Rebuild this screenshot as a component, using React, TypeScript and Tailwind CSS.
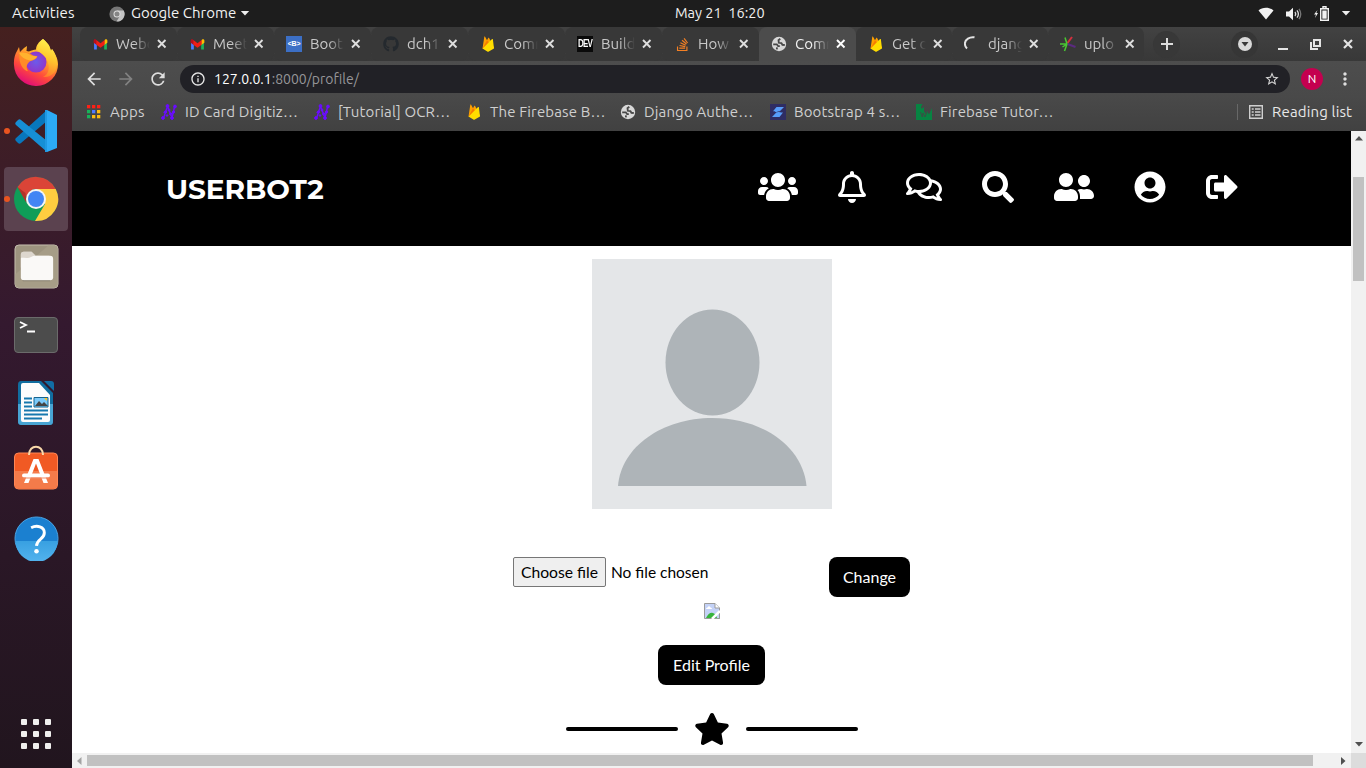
import type { ReactNode } from 'react';
import {
  FaUsers, FaRegBell, FaRegComments, FaSearch, FaUserFriends, FaUserCircle,
  FaSignOutAlt, FaStar, FaGithub, FaStackOverflow,
} from 'react-icons/fa';
import {
  MdArrowBack, MdArrowForward, MdRefresh, MdInfoOutline, MdStarBorder,
  MdMoreVert,
} from 'react-icons/md';

const Gmail = () => (
  <svg viewBox="0 0 16 12" className="h-[11px] w-[15px]">
    <path d="M1 2v9.500h3V5z" fill="#4a7cff" />
    <path d="M12 5v6.500h3V2z" fill="#1fb05a" />
    <path d="M12 2.200V6.500L15.500 4V2c0-1.600-1.800-2-2.700-1.200z" fill="#fbbc04" />
    <path d="M4 2v4.600L.5 4V2C.5.400 2.300 0 3.200.8z" fill="#b80e1c" />
    <path d="M3.500 1.100 8 4.600l4.500-3.500v5.200L8 9.500 3.500 6.300z" fill="#ef1d16" />
  </svg>
);

const Firebase = () => (
  <svg viewBox="0 0 16 16" className="size-4">
    <path d="M2.500 12.500 4.300.8c.1-.5.600-.5.800-.1L7 4.200 8.200 2c.2-.4.700-.4.900 0l5 10z" fill="#ffa000" />
    <path d="m2.500 12.500 7-7 2.600-2.400c.3-.3.700-.1.800.3L14 12.500l-5.200 3c-.5.300-1 .3-1.500 0z" fill="#ffdd00" />
    <path d="M2.500 12.500 8.700 6.300 7 4.200z" fill="#f57c00" />
  </svg>
);

const Bracket = () => (
  <span className="flex size-4 items-center justify-center bg-[#3c6fc5] font-['Liberation_Sans'] text-[7px] font-bold tracking-[-0.200px] text-white">&lt;B&gt;</span>
);

const Dev = () => (
  <span className="flex size-4 items-center justify-center bg-[#0a0a0a] font-['Liberation_Sans'] text-[8px] font-bold tracking-[-0.800px] text-white">
    <span className="scale-y-125">DEV</span>
  </span>
);

const Globe = () => (
  <svg viewBox="0 0 16 16" className="size-4">
    <circle cx="8" cy="8" r="7.200" fill="#d8d8d8" />
    <path d="M2.200 8.300h3.600l1.400 1.900h1.600M5.800 13.400l.2-2" fill="none" stroke="#484848" strokeWidth="1.800" />
    <path d="M9.300 2.800 7.500 4.200l.3 2.600 2.600.3 1 1.700 2.400.2" fill="none" stroke="#484848" strokeWidth="1.800" />
  </svg>
);

const Spinner = () => (
  <svg viewBox="0 0 16 16" className="size-4" fill="none" stroke="#e4e4e4" strokeWidth="2">
    <path d="M10.500 1.300C5.500.5 1.200 3.500.9 7.300c-.1 2.200.7 4 2.100 5.300" />
  </svg>
);

const Burst = () => (
  <svg viewBox="0 0 16 16" className="size-4" fill="none" strokeWidth="1.700">
    <path d="M7.500 7 12 1" stroke="#d2303f" strokeWidth="2" />
    <path d="M7.500 8 15.500 11" stroke="#5b2a80" strokeWidth="2" />
    <path d="M7 8 4.500 15M7 8H0M7 8 5 1.500M7 8 2.500 11" stroke="#49c832" strokeWidth="1.500" />
  </svg>
);

const Hacker = () => (
  <svg viewBox="0 0 16 16" className="size-4" fill="#6a0dff" stroke="#6a0dff">
    <path d="M3 13 6.500 2l4.500 12L13.500 3" fill="none" strokeWidth="1.400" />
    <path d="m2.500 8.500 3.500-1M10 9.500l3-1" fill="none" strokeWidth="1.300" />
    <circle cx="2" cy="14" r="1.400" /><circle cx="6.500" cy="2" r="1.400" />
    <circle cx="11" cy="14" r="1.400" /><circle cx="14" cy="2.500" r="1.400" />
    <circle cx="4.500" cy="8" r="1.200" /><circle cx="8" cy="6" r="1" />
    <circle cx="9.500" cy="10" r="1" /><circle cx="12.500" cy="8" r="1.200" /><circle cx="6" cy="11.500" r=".8" />
  </svg>
);

const Bolt = () => (
  <svg viewBox="0 0 16 16" className="size-4">
    <path d="M0 0h16v16H0z" fill="#2f2d63" />
    <path d="M6.500 3H14l-4.200 4.300H3zM6.300 8.500H13L9.500 13H2z" fill="#579dfa" />
    <path d="m5 7 6 2.500" stroke="#579dfa" strokeWidth="1.300" />
  </svg>
);

const Green = () => (
  <svg viewBox="0 0 16 16" className="size-4">
    <path d="M0 0h6.500C5 2 4.700 3.500 5.500 4.500 7 4.500 8 3.500 8 2v5l1.500 3L11 7l2 3.500L16 4v12H0z" fill="#078442" />
    <path d="m4.500 8 1.800 5 .7-4 2 4 2-5" stroke="#444" fill="none" strokeWidth=".8" />
  </svg>
);

const AppsGrid = () => (
  <svg viewBox="0 0 14 14" className="size-[14px]">
    {['#ff2015', '#ff2015', '#ff2015', '#18b35a', '#507bff', '#ffbd10', '#18b35a', '#ffbd10', '#ffbd10'].map((c, i) => (
      <rect key={i} x={(i % 3) * 5} y={Math.floor(i / 3) * 5} width="3.300" height="3.300" fill={c} />
    ))}
  </svg>
);

type Tab = { icon: ReactNode; label: string; active?: boolean; sep?: boolean; narrow?: boolean };
const tabs: Tab[] = [
  { icon: <Gmail />, label: 'Webc', sep: true },
  { icon: <Gmail />, label: 'Meet', sep: true },
  { icon: <Bracket />, label: 'Boot', sep: true },
  { icon: <FaGithub className="size-4 text-[#24292e]" />, label: 'dch1', sep: true },
  { icon: <Firebase />, label: 'Comr', sep: true },
  { icon: <Dev />, label: 'Build', sep: true },
  { icon: <FaStackOverflow className="size-[15px] text-[#f48024]" />, label: 'How' },
  { icon: <Globe />, label: 'Comr', active: true },
  { icon: <Firebase />, label: 'Get d', sep: true, narrow: true },
  { icon: <Spinner />, label: 'djang', sep: true, narrow: true },
  { icon: <Burst />, label: 'uplo', narrow: true },
];

function TabItem({ tab }: { tab: Tab }) {
  const width = tab.narrow ? 'w-24' : 'w-[97px]';
  const tone = tab.active ? 'bg-[#4c4c4c] text-[#f0f0f0] rounded-t-lg' : 'bg-[#383838] text-[#c8c8c8] rounded-lg';
  return (
    <div className={`${width} ${tone} flex h-[34px] shrink-0 items-center pl-3`}>
      <span className="flex size-4 shrink-0 items-center justify-center">{tab.icon}</span>
      <span className="ml-2 w-[34px] overflow-hidden text-[15px] whitespace-nowrap [mask-image:linear-gradient(to_right,black_55%,transparent_100%)]">{tab.label}</span>
      <svg viewBox="0 0 14 14" className={`ml-[5px] size-[14px] shrink-0 ${tab.active ? 'text-white' : 'text-[#dedede]'}`}>
        <path d="m3 3 7.500 7.500M10.500 3 3 10.500" stroke="currentColor" strokeWidth="1.900" />
      </svg>
      {tab.sep && <span className="-mr-px ml-auto h-5 w-px bg-[#747474]" />}
    </div>
  );
}

const bookmarks = [
  { icon: <Hacker />, label: 'ID Card Digitiz…', box: 'w-[153px]' },
  { icon: <Hacker />, label: '[Tutorial] OCR…', box: 'w-[152px]' },
  { icon: <Firebase />, label: 'The Firebase B…', box: 'w-[154px]' },
  { icon: <Globe />, label: 'Django Authe…', box: 'w-[150px]' },
  { icon: <Bolt />, label: 'Bootstrap 4 s…', box: 'w-[146px]' },
  { icon: <Green />, label: 'Firebase Tutor…', box: 'w-[150px]' },
];

function TopBar() {
  return (
    <header className="flex h-[27px] shrink-0 items-center bg-[#1d1d1d] text-[15px] text-[#f2f2f2]">
      <span className="w-[97px] pl-3 tracking-[0.100px]">Activities</span>
      <svg viewBox="0 0 16 16" className="ml-3 size-4">
        <circle cx="8" cy="8" r="7.600" fill="#777" />
        <path d="M8 4.500h6.700A7.600 7.600 0 0 1 7.500 15.600L11 9.800z" fill="#c4c4c4" />
        <circle cx="8" cy="8" r="3.500" fill="#ddd" /><circle cx="8" cy="8" r="2.500" fill="#858585" />
      </svg>
      <span className="ml-1.5 w-[109px] whitespace-nowrap">Google Chrome</span>
      <svg viewBox="0 0 10 6" className="h-[5px] w-[10px]"><path d="M0 0h10L5 5.500z" fill="#eee" /></svg>
      <span className="-mt-0.5 ml-[425px] w-[95px] text-[14.500px] whitespace-pre">May 21  16:20</span>
      <div className="ml-auto flex items-center pr-[15px]">
        <svg viewBox="0 0 16 13" className="h-[13px] w-4"><path d="M.5 3.500C4-.2 12-.2 15.500 3.500L8 12.500z" fill="#f2f2f2" /></svg>
        <svg viewBox="0 0 16 14" className="ml-3 h-[14px] w-4" fill="none" stroke="#ddd" strokeWidth="1.300">
          <path d="M0 4.500h3L7 .8v12.400L3 9.500H0z" fill="#f2f2f2" stroke="none" />
          <path d="M9 5q1.500 2 0 4M11 3.300q2.800 3.700 0 7.400" /><path d="M13 1.800q3.500 5.200 0 10.400" stroke="#777" />
        </svg>
        <svg viewBox="0 0 16 16" className="ml-3 size-4">
          <path d="M3.500 4 0 8.500h2L1 12l3-5H2.300z" fill="#f2f2f2" />
          <path d="M6.700 2.700h7.600v11.600H6.700zM9 2V.8h3V2" fill="none" stroke="#f2f2f2" strokeWidth="1.400" />
          <path d="M8.300 4.500h4.400v8.200H8.300z" fill="#f2f2f2" />
        </svg>
        <svg viewBox="0 0 10 6" className="ml-[11px] h-[5px] w-[10px]"><path d="M0 0h10L5 5.500z" fill="#eee" /></svg>
      </div>
    </header>
  );
}

const Firefox = () => (
  <svg viewBox="0 0 46 48" className="-mt-0.5 h-12 w-[46px]">
    <defs>
      <linearGradient id="ff" x1=".8" y1="0" x2=".3" y2="1"><stop stopColor="#fff14a" /><stop offset=".4" stopColor="#ffa52a" /><stop offset=".7" stopColor="#ff493c" /><stop offset="1" stopColor="#df087c" /></linearGradient>
      <linearGradient id="fy" x1=".6" y1="0" x2=".4" y2="1"><stop stopColor="#fff44f" /><stop offset=".5" stopColor="#ffc62e" /><stop offset="1" stopColor="#ff7a2c" /></linearGradient>
      <radialGradient id="fp"><stop stopColor="#6b5bea" /><stop offset="1" stopColor="#9136c9" /></radialGradient>
    </defs>
    <path d="M30 1c3 3 6 5 7 9l1 3 1-2c3 4 6 10 6 15a22 21.500 0 0 1-44 1C.500 21 2 16 4 13l2-4 1 5 4-4 3-2-.5 5 2.500.5c2-1 5-2 7-2 0-4 3-8 7-10.500z" fill="url(#ff)" />
    <circle cx="23" cy="24" r="10.500" fill="url(#fp)" />
    <path d="M30 1c3 3 6 5 7 9l1 3 1-2c3 4 5 9 5 14 0 9-6 15-14 14 5-2 7-8 5-14-1-6-5-8-11-13 0-4 2-8 6-11z" fill="url(#fy)" />
    <path d="M6 15c5-2 10-1 14 2.500l4.500.8c-1 3-4 4-7.500 5-4 3-4 7-2 10-5-1-9-7-9-18.300z" fill="#ff8b26" />
    <path d="M6 15c5-1 9 0 12 2.500l6 1c-1 2.500-4 3.500-7 4-5-1-9-3.500-11-7.500z" fill="#ffb22e" />
  </svg>
);

const Code = () => (
  <svg viewBox="0 0 44 44" className="ml-0.5 size-11">
    <path d="m32 1 10 5v33l-10 4z" fill="#2caaf5" />
    <path d="M32 1v11L6 34c-1 1-2 1-3 0l-2-2c-1-1-1-2 0-3z" fill="#0877bd" />
    <path d="M32 43V32L6 11c-1-1-2-1-3 0l-2 2c-1 1-1 2 0 3z" fill="#168fd5" />
    <path d="m30 1 2 0v42h-2z" fill="#2099e2" />
  </svg>
);

const Chrome = () => (
  <svg viewBox="0 0 46 46" className="size-[46px]">
    <circle cx="23" cy="23" r="22" fill="#0f9d58" />
    <path d="M23 13h19.700A22 22 0 0 1 22 45l10-17z" fill="#ffcd40" />
    <path d="M4.500 11A22 22 0 0 1 42.700 13H23c-4 0-8 3-9.500 8z" fill="#db4437" />
    <path d="m4.500 11 9 16-1-10z" fill="#b43328" />
    <circle cx="23" cy="23" r="10" fill="#f5f5f5" /><circle cx="23" cy="23" r="8" fill="#4285f4" />
  </svg>
);

const Files = () => (
  <svg viewBox="0 0 46 46" className="-mt-px size-[45px]">
    <rect x="1" y="1" width="44" height="44" rx="4" fill="#9d947f" stroke="#c7c1b0" />
    <path d="M1.500 31 35 1.500h6c2 0 3.500 1 3.500 3.500v36c0 2-1 3.500-3.500 3.500H5c-2 0-3.500-1-3.500-3.500z" fill="#a69d87" />
    <path d="M9 37.500h28" stroke="#777060" />
    <path d="M7 14V11c0-2 1-3 3-3h8l4 4h14v12H7z" fill="#ddd7ce" />
    <rect x="7" y="12" width="33" height="25" rx="3" fill="#faf9f7" />
    <path d="M7 14c4 0 8 1 11-1l4-2h-1l-3-3h-8c-2 0-3 1-3 3z" fill="#ddd7ce" />
  </svg>
);

const Terminal = () => (
  <svg viewBox="0 0 46 38" className="h-[38px] w-[46px]">
    <rect x="1.500" y="1.500" width="43" height="35" rx="3.500" fill="#4c4c4c" stroke="#6b6b6b" />
    <path d="m7 6 6 3-6 3M14 15.500h8" stroke="#fff" strokeWidth="1.800" fill="none" />
  </svg>
);

const Writer = () => (
  <svg viewBox="0 0 38 46" className="h-[46px] w-[38px]">
    <path d="M4 1h20l12 12v28c0 3-1 4-4 4H5c-3 0-4-1-4-4V5c0-3 1-4 3-4z" fill="#116d9f" />
    <path d="M1 24h35v17c0 3-1 4-4 4H5c-3 0-4-1-4-4z" fill="#48a4d3" />
    <path d="M6 3h16l11 12v25q0 2-2 2H6q-2 0-2-2V5q0-2 2-2z" fill="#fcfcfc" />
    <path d="M27 1h7q3 0 3 3v7z" fill="#116da4" />
    <path d="M7 18.500h8M7 22.500h8M7 26.500h8M7 30.500h24M7 34.500h24M7 38.500h18" stroke="#1678ae" strokeWidth="2" />
    <path d="M17 17.500h14v9.500H17z" fill="#7bcafa" stroke="#16648e" />
    <path d="m18 26 4-5 3 3 2-2 4 4z" fill="#444" /><path d="M27 18h3v3z" fill="#ffc322" />
  </svg>
);

const Software = () => (
  <svg viewBox="0 0 46 46" className="-mt-[7px] size-[46px]">
    <rect x="1.500" y="8" width="43" height="36" rx="4" fill="#f15a24" stroke="#ff8655" />
    <path d="M2 26h42v14q0 3.500-3 3.500H5q-3 0-3-3.500z" fill="#f47b4a" />
    <path d="M16 10c0-11 14-11 14 0" fill="none" stroke="#f9d9aa" strokeWidth="2" />
    <path d="M20.500 14h5L35 38h-4.500L23 18.500 15.500 38H11z" fill="#fff" />
    <rect x="9" y="28.500" width="28" height="4" rx="2" fill="#fff" />
    <path d="M10 33h26" stroke="#f08a64" />
  </svg>
);

const Help = () => (
  <svg viewBox="0 0 46 46" className="-mt-0.5 size-[45px]">
    <defs><linearGradient id="hq" x1="0" y1="0" x2="0" y2="1"><stop stopColor="#38a0e1" /><stop offset="1" stopColor="#53b3ee" /></linearGradient></defs>
    <circle cx="23" cy="23" r="22" fill="#1b80d0" stroke="#4ba4e4" />
    <path d="M1.500 25.500h43A21.500 21.500 0 0 1 1.500 25.500z" fill="url(#hq)" />
    <path d="M17.500 12c6-3 13.500-1 13.500 5 0 7-7.500 6-8 13.500" fill="none" stroke="#fff" strokeWidth="3" />
    <circle cx="23" cy="36" r="2.300" fill="#fff" />
  </svg>
);

const dock = [
  { name: 'Firefox', icon: <Firefox /> },
  { name: 'Code', icon: <Code />, dot: true },
  { name: 'Chrome', icon: <Chrome />, dot: true, active: true },
  { name: 'Files', icon: <Files /> },
  { name: 'Terminal', icon: <Terminal /> },
  { name: 'Writer', icon: <Writer /> },
  { name: 'Software', icon: <Software /> },
  { name: 'Help', icon: <Help /> },
];

function Dock() {
  return (
    <aside className="flex w-[72px] shrink-0 flex-col items-center gap-1 bg-linear-to-b from-[#45201f] via-[#34192f] via-40% to-[#21151e] pt-1">
      {dock.map((d) => (
        <div key={d.name} className={`relative flex size-16 shrink-0 items-center justify-center rounded ${d.active ? 'bg-[#5b424f]' : ''}`}>
          {d.icon}
          {d.dot && <span className="absolute top-[29px] left-0 size-1.5 rounded-full bg-[#e95420]" />}
        </div>
      ))}
      <div className="mt-auto mb-[19px] grid grid-cols-3 gap-1.5">
        {Array.from({ length: 9 }, (_, i) => <span key={i} className="size-1.5 rounded-[1px] bg-[#f0efee]" />)}
      </div>
    </aside>
  );
}

function BrowserChrome() {
  return (
    <div className="h-[104px] shrink-0 bg-[#424242]">
      <div className="flex h-[34px] bg-linear-to-b from-[#424242] to-[#383838] pl-2">
        {tabs.map((t, i) => <TabItem key={i} tab={t} />)}
        <div className="flex flex-1 items-center pl-[9px]">
          <span className="flex size-[27px] items-center justify-center rounded-full bg-[#383838]">
            <svg viewBox="0 0 12 12" className="size-3"><path d="M6 0v12M0 6h12" stroke="#ddd" strokeWidth="2" /></svg>
          </span>
          <span className="ml-[51px] flex size-[27px] items-center justify-center rounded-full bg-[#363636]">
            <svg viewBox="0 0 14 14" className="size-[14px]"><circle cx="7" cy="7" r="7" fill="#d9d9d9" /><path d="M3.500 5h7L7 9.500z" fill="#383838" /></svg>
          </span>
          <span className="mt-[9px] ml-5 h-0.5 w-[10px] bg-[#e4e4e4]" />
          <svg viewBox="0 0 11 11" className="ml-[22px] size-[11px]" fill="none" stroke="#e4e4e4" strokeWidth="2"><path d="M4 1h6v6H4zM1 3v7h7" /></svg>
          <svg viewBox="0 0 10 10" className="ml-[22px] size-[10px]"><path d="m1 1 8 8M9 1 1 9" stroke="#e4e4e4" strokeWidth="2.200" /></svg>
        </div>
      </div>
      <div className="flex h-9 items-center bg-linear-to-b from-[#4d4d4d] to-[#494949] pl-3">
        <MdArrowBack className="size-5 text-[#dedede]" />
        <MdArrowForward className="ml-3 size-5 text-[#828282]" />
        <MdRefresh className="ml-3 size-5 text-[#dedede]" />
        <div className="ml-3 flex h-7 w-[1110px] items-center rounded-full bg-[#212126] px-2.5 text-[14px]">
          <MdInfoOutline className="size-4 text-[#e8e8e8]" />
          <span className="ml-2 text-[#969699]"><span className="text-white">127.0.0.1</span>:8000/profile/</span>
          <MdStarBorder className="ml-auto size-4 text-[#d6d6d6]" />
        </div>
        <span className="ml-[11px] flex size-[22px] items-center justify-center rounded-full bg-[#c4004f] text-[12px] text-white">N</span>
        <MdMoreVert className="ml-3 size-5 text-[#dedede]" />
      </div>
      <div className="flex h-[34px] items-center bg-linear-to-b from-[#494949] to-[#414141] pb-1 pl-[15px] text-[15px] text-[#cfcfcf]">
        <AppsGrid />
        <span className="ml-[9px] w-[51px] tracking-[0.200px]">Apps</span>
        {bookmarks.map((b) => (
          <div key={b.label} className={`flex shrink-0 items-center gap-2 ${b.box}`}>
            {b.icon}
            <span className="tracking-[0.150px] whitespace-nowrap">{b.label}</span>
          </div>
        ))}
        <span className="ml-auto h-4 w-px bg-[#686868]" />
        <svg viewBox="0 0 14 14" className="ml-[11px] size-[14px]" fill="none" stroke="#cfcfcf" strokeWidth="1.400">
          <path d="M.7.7h12.600v12.600H.7zM2.700 4h2M6 4h5.500M2.700 7h2M6 7h5.500M2.700 10h2M6 10h5.500" />
        </svg>
        <span className="ml-[9px] w-[94px] tracking-[0.150px] whitespace-nowrap text-[#e8e8e8]">Reading list</span>
      </div>
    </div>
  );
}

const BrokenImage = () => (
  <svg viewBox="0 0 16 16" className="size-4">
    <path d="M.5.500h10.500l4.500 4.500v10.500H.5z" fill="#c4d2f7" stroke="#9b9b9b" />
    <path d="M11 .5V5h4.500" fill="#fff" stroke="#9b9b9b" />
    <path d="M2 6q0-1.500 1.500-1.500Q5 2 6.500 4.500 8 4.500 8 6z" fill="#fff" />
    <path d="M2 15q3-6 7-5 3 1 4 5z" fill="#38b43d" />
    <path d="m8 16 8-8" stroke="#fff" strokeWidth="2.500" /><path d="M12 15.500h3.500V12" stroke="#9b9b9b" fill="none" />
  </svg>
);

function Page() {
  return (
    <main className="flex min-w-0 flex-1 flex-col bg-white font-[Lato,sans-serif] text-[16px] text-black">
      <nav className="flex h-[115px] shrink-0 items-center justify-between bg-black pr-[113px] pl-[94px] text-white">
        <span className="mt-px w-[160px] whitespace-nowrap font-[Montserrat,Inter,sans-serif] text-[28px] font-bold tracking-[-0.100px]">USERBOT2</span>
        <div className="-mt-1 flex items-center gap-10">
          <FaUsers className="h-8 w-10" />
          <FaRegBell className="h-8 w-7" />
          <FaRegComments className="h-8 w-9" />
          <FaSearch className="size-8" />
          <FaUserFriends className="h-8 w-10" />
          <FaUserCircle className="size-8" />
          <FaSignOutAlt className="size-8" />
        </div>
      </nav>
      <div className="flex flex-1 flex-col items-center pt-[13px]">
        <svg viewBox="0 0 240 250" className="h-[250px] w-60 shrink-0">
          <path d="M0 0h240v250H0z" fill="#e4e6e8" />
          <ellipse cx="120.500" cy="103.500" rx="47" ry="53" fill="#aeb4b8" />
          <path d="M26 227C29 188 70 159 120.500 159S211 188 214.500 227z" fill="#aeb4b8" />
        </svg>
        <form className="mt-12 flex h-10 w-[397px] items-start justify-between">
          <div className="flex items-center">
            <button type="button" className="h-[30px] w-[93px] rounded-[2px] border border-[#767676] bg-[#efefef] pt-0.5 text-[15.700px] whitespace-nowrap">Choose file</button>
            <span className="ml-[5px] pt-0.5 text-[15.500px]">No file chosen</span>
          </div>
          <button type="button" className="h-10 w-[81px] rounded-lg bg-black text-white">Change</button>
        </form>
        <div className="mt-1.5"><BrokenImage /></div>
        <button type="button" className="mt-[26px] h-10 w-[107px] shrink-0 rounded-lg bg-black text-white">Edit Profile</button>
        <div className="mt-[28px] flex items-center">
          <span className="h-1 w-28 rounded-full bg-black" />
          <FaStar className="mx-4 h-8 w-9" />
          <span className="h-1 w-28 rounded-full bg-black" />
        </div>
      </div>
    </main>
  );
}

export default function App() {
  return (
    <div className="flex h-[768px] w-[1366px] flex-col overflow-hidden font-[Ubuntu,'Noto_Sans',sans-serif]">
      <TopBar />
      <div className="flex min-h-0 flex-1">
        <Dock />
        <div className="flex min-w-0 flex-1 flex-col">
          <BrowserChrome />
          <div className="flex min-h-0 flex-1">
            <Page />
            <div className="flex w-[15px] flex-col items-center bg-[#f1f1f1] pt-[5px] pb-[6px]">
              <svg viewBox="0 0 8 5" className="h-[5px] w-2"><path d="M0 4.500h8L4 0z" fill="#505050" /></svg>
              <span className="mt-9 h-[104px] w-[11px] bg-[#c1c1c1]" />
              <svg viewBox="0 0 8 5" className="mt-auto h-[5px] w-2"><path d="M0 0h8L4 4.500z" fill="#505050" /></svg>
            </div>
          </div>
          <div className="flex h-[15px] shrink-0 items-center bg-[#f1f1f1]">
            <svg viewBox="0 0 5 8" className="ml-[5px] h-2 w-[5px]"><path d="M4.500 0v8L0 4z" fill="#a3a3a3" /></svg>
            <span className="ml-[5px] h-[11px] w-[1226px] bg-[#c1c1c1]" />
            <svg viewBox="0 0 5 8" className="ml-auto h-2 w-[5px]"><path d="M0 0v8l4.500-4z" fill="#505050" /></svg>
            <span className="ml-[5px] size-[15px] bg-[#dcdcdc]" />
          </div>
        </div>
      </div>
    </div>
  );
}
